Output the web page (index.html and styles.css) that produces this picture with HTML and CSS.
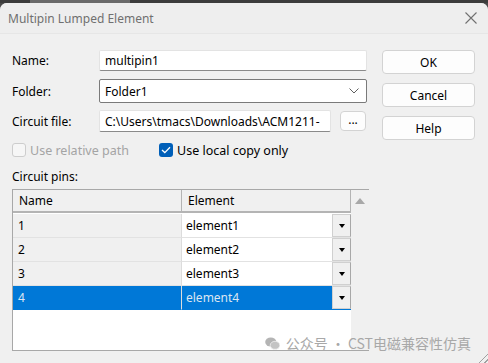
FILE: index.html
```html
<!DOCTYPE html>
<html lang="en">
<head>
    <meta charset="UTF-8">
    <title>Multipin Lumped Element</title>
    <link rel="stylesheet" href="styles.css">
</head>
<body>
<div class="strip"></div>
<div class="dialog">
    <div class="titlebar">
        <span class="title">Multipin Lumped Element</span>
        <svg class="close" width="12" height="12" viewBox="0 0 12 12"><path d="M0.5 0.5L11.5 11.5M11.5 0.5L0.5 11.5" stroke="#707070" stroke-width="1.1" fill="none"/></svg>
    </div>
    <div class="content">
        <div class="main">
            <div class="row row-name">
                <label>Name:</label>
                <div class="field">multipin1</div>
            </div>
            <div class="row row-folder">
                <label>Folder:</label>
                <div class="field select">
                    <span>Folder1</span>
                    <svg width="10" height="6" viewBox="0 0 10 6"><path d="M0.5 0.5L5 5L9.5 0.5" stroke="#606060" fill="none"/></svg>
                </div>
            </div>
            <div class="row row-file">
                <label>Circuit file:</label>
                <div class="filebox">
                    <div class="field">C:\Users\tmacs\Downloads\ACM1211-</div>
                    <div class="btn browse">...</div>
                </div>
            </div>
            <div class="checks">
                <div class="check disabled"><span class="box"></span>Use relative path</div>
                <div class="check checked"><span class="box"><svg width="10" height="8" viewBox="0 0 10 8"><path d="M1 4L3.8 6.6L9 1.2" stroke="#fff" stroke-width="1.3" fill="none"/></svg></span>Use local copy only</div>
            </div>
            <div class="pins-label">Circuit pins:</div>
            <div class="pins">
                <div class="grid">
                    <div class="head">Name</div>
                    <div class="head">Element</div>
                    <div class="cell key">1</div>
                    <div class="cell val"><span>element1</span><span class="drop"></span></div>
                    <div class="cell key">2</div>
                    <div class="cell val"><span>element2</span><span class="drop"></span></div>
                    <div class="cell key">3</div>
                    <div class="cell val"><span>element3</span><span class="drop"></span></div>
                    <div class="cell key sel">4</div>
                    <div class="cell val sel"><span>element4</span><span class="drop"></span></div>
                </div>
                <div class="scroll"><span class="up"></span></div>
            </div>
        </div>
        <div class="buttons">
            <div class="btn">OK</div>
            <div class="btn">Cancel</div>
            <div class="btn">Help</div>
        </div>
    </div>
    <div class="watermark">
        <svg width="15" height="13" viewBox="0 0 15 13"><ellipse cx="5.8" cy="5" rx="5.6" ry="4.6" fill="#b4b4b4"/><ellipse cx="10" cy="8.3" rx="4.8" ry="4" fill="#c4c4c4" stroke="#f0f0f0" stroke-width="0.8"/></svg>
        <span>公众号 · CST电磁兼容性仿真</span>
    </div>
    <div class="grip"></div>
</div>
</body>
</html>
```

FILE: styles.css
```css
*{
    margin: 0;
    padding: 0;
    box-sizing: border-box;
}
body{
    width: 488px;
    height: 363px;
    overflow: hidden;
    background-color: #4a4a4a;
    font-family: "Noto Sans", "Open Sans", sans-serif;
    font-size: 12px;
    color: #000;
}
.strip{
    height: 3px;
    background: linear-gradient(to right, #3c3c3c 0, #3c3c3c 30px, #6a6a6a 30px, #6a6a6a 130px, #3c3c3c 130px);
}
.dialog{
    position: relative;
    height: 360px;
    background-color: #f0f0f0;
    border-radius: 7px 7px 0 0;
}
.titlebar{
    height: 31px;
    display: flex;
    align-items: center;
    justify-content: space-between;
    padding: 0 11px 0 8px;
    background-color: #eeeeee;
    border-radius: 7px 7px 0 0;
    border-bottom: 1px solid #e6e6e6;
}
.title{
    font-size: 12px;
    color: #707070;
}
.content{
    display: flex;
    gap: 13px;
    padding: 16px 0 0 12px;
}
.main{
    width: 357px;
}
.row{
    display: grid;
    grid-template-columns: 87px 268px;
    align-items: center;
}
.row-name{
    height: 21px;
}
.row-folder{
    height: 24px;
    margin-top: 8px;
}
.row-file{
    height: 22px;
    margin-top: 7px;
}
.field{
    height: 100%;
    display: flex;
    align-items: center;
    padding-left: 5px;
    background-color: #fff;
    border: 1px solid #e3e3e3;
    border-bottom-color: #8a8a8a;
    border-radius: 2px;
    white-space: nowrap;
    overflow: hidden;
}
.select{
    justify-content: space-between;
    padding-right: 7px;
    border: 1px solid #7a7a7a;
}
.filebox{
    display: flex;
    height: 100%;
    gap: 9px;
}
.filebox .field{
    width: 232px;
}
.btn{
    display: flex;
    align-items: center;
    justify-content: center;
    background-color: #fdfdfd;
    border: 1px solid #d3d3d3;
    border-radius: 4px;
}
.browse{
    width: 26px;
    height: 20px;
    margin-top: 1px;
    padding-bottom: 4px;
}
.checks{
    display: flex;
    align-items: center;
    height: 14px;
    margin-top: 11px;
}
.check{
    display: flex;
    align-items: center;
    gap: 4px;
    font-size: 12.5px;
}
.check.disabled{
    width: 147px;
    color: #a4a4a4;
}
.box{
    width: 14px;
    height: 14px;
    border-radius: 3px;
    display: flex;
    align-items: center;
    justify-content: center;
}
.disabled .box{
    border: 1px solid #cdcdcd;
    background-color: #f6f6f6;
}
.checked .box{
    background-color: #005fb8;
}
.pins-label{
    margin-top: 11px;
    line-height: 17px;
}
.pins{
    display: flex;
    height: 162px;
    margin-top: 4px;
    border: 1px solid #a8a8a8;
    border-right: none;
}
.grid{
    width: 339px;
    display: grid;
    grid-template-columns: 169px 169px;
    grid-auto-rows: 24px;
    align-content: start;
    background-color: #fff;
}
.head{
    height: 23px;
    display: flex;
    align-items: center;
    padding-left: 6px;
    background-color: #f0f0f0;
    border-bottom: 2px solid #b4b4b4;
    border-right: 1px solid #b4b4b4;
}
.cell{
    display: flex;
    align-items: center;
    border-bottom: 1px solid #e2e2e2;
}
.key{
    padding-left: 5px;
    background-color: #f0f0f0;
    border-right: 1px solid #dcdcdc;
}
.val{
    justify-content: space-between;
    padding-left: 4px;
}
.drop{
    width: 19px;
    height: 23px;
    background-color: #f0f0f0;
    border: 1px solid #d0d0d0;
    border-right-color: #a8a8a8;
    display: flex;
    align-items: center;
    justify-content: center;
}
.drop:after{
    content: '';
    border-left: 3px solid transparent;
    border-right: 3px solid transparent;
    border-top: 4px solid #000;
}
.sel{
    background-color: #0078d7;
    color: #dce6f2;
    border-bottom-color: #0078d7;
}
.scroll{
    width: 18px;
    display: flex;
    justify-content: center;
    padding-top: 8px;
    background-color: #f0f0f0;
}
.up{
    width: 0;
    height: 0;
    border-left: 5px solid transparent;
    border-right: 5px solid transparent;
    border-bottom: 6px solid #a8a8a8;
}
.buttons{
    width: 93px;
    display: flex;
    flex-direction: column;
    gap: 9px;
}
.buttons .btn{
    height: 24px;
}
.watermark{
    position: absolute;
    right: 17px;
    top: 330px;
    display: flex;
    align-items: center;
    gap: 6px;
    font-family: "Noto Sans CJK SC", sans-serif;
    font-size: 14px;
    color: #a8a8a8;
}
.grip{
    position: absolute;
    right: 0;
    bottom: 0;
    width: 9px;
    height: 9px;
    background: linear-gradient(135deg, transparent 45%, #a0a0a0 45%, #a0a0a0 55%, transparent 55%, transparent 75%, #a0a0a0 75%, #a0a0a0 85%, transparent 85%);
}
```
